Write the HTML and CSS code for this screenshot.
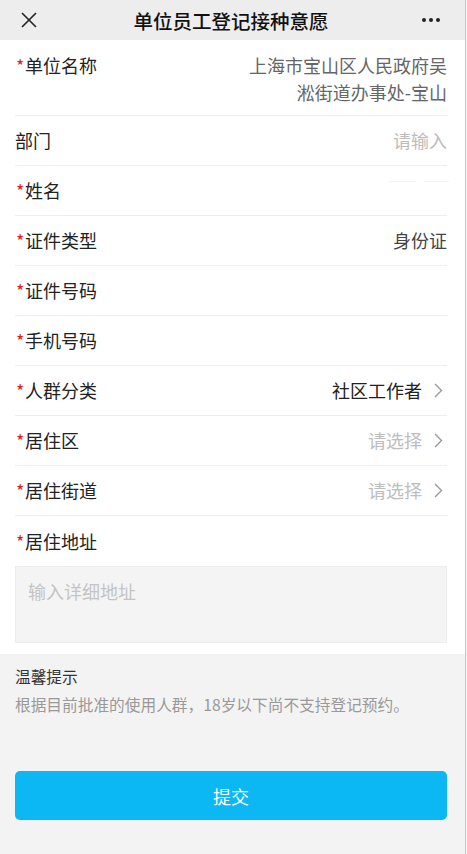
FILE: index.html
```html
<!DOCTYPE html>
<html lang="zh">
<head>
<meta charset="utf-8">
<link rel="stylesheet" href="styles.css">
</head>
<body>
<div class="page">
  <header class="nav">
    <svg class="close" width="16" height="16" viewBox="0 0 16 16"><path d="M1 1L15 15M15 1L1 15" stroke="#222" stroke-width="1.6" fill="none"/></svg>
    <div class="title">单位员工登记接种意愿</div>
    <svg class="more" width="20" height="6" viewBox="0 0 20 6"><circle cx="3" cy="3" r="2" fill="#222"/><circle cx="10" cy="3" r="2" fill="#222"/><circle cx="17" cy="3" r="2" fill="#222"/></svg>
  </header>
  <section class="form">
    <div class="row tall">
      <div class="label"><span class="req">*</span>单位名称</div>
      <div class="value gray multi">上海市宝山区人民政府吴<br>淞街道办事处-宝山</div>
    </div>
    <div class="row">
      <div class="label">部门</div>
      <div class="value ph">请输入</div>
    </div>
    <div class="row">
      <div class="label"><span class="req">*</span>姓名</div>
      <div class="value"><span class="ghost"></span><span class="ghost short"></span></div>
    </div>
    <div class="row">
      <div class="label"><span class="req">*</span>证件类型</div>
      <div class="value dark">身份证</div>
    </div>
    <div class="row">
      <div class="label"><span class="req">*</span>证件号码</div>
      <div class="value"></div>
    </div>
    <div class="row">
      <div class="label"><span class="req">*</span>手机号码</div>
      <div class="value"></div>
    </div>
    <div class="row">
      <div class="label"><span class="req">*</span>人群分类</div>
      <div class="value black">社区工作者<svg class="chev" width="9" height="15" viewBox="0 0 9 15"><path d="M1 1L7.5 7.5L1 14" stroke="#999" stroke-width="1.4" fill="none"/></svg></div>
    </div>
    <div class="row">
      <div class="label"><span class="req">*</span>居住区</div>
      <div class="value ph">请选择<svg class="chev" width="9" height="15" viewBox="0 0 9 15"><path d="M1 1L7.5 7.5L1 14" stroke="#999" stroke-width="1.4" fill="none"/></svg></div>
    </div>
    <div class="row">
      <div class="label"><span class="req">*</span>居住街道</div>
      <div class="value ph">请选择<svg class="chev" width="9" height="15" viewBox="0 0 9 15"><path d="M1 1L7.5 7.5L1 14" stroke="#999" stroke-width="1.4" fill="none"/></svg></div>
    </div>
    <div class="addr">
      <div class="label"><span class="req">*</span>居住地址</div>
      <div class="textarea">输入详细地址</div>
    </div>
  </section>
  <section class="tips">
    <div class="tips-title">温馨提示</div>
    <div class="tips-text">根据目前批准的使用人群，18岁以下尚不支持登记预约。</div>
  </section>
  <div class="btn-wrap">
    <button class="submit">提交</button>
  </div>
</div>
</body>
</html>
```
FILE: styles.css
```css
* { box-sizing: border-box; }
html, body { margin: 0; padding: 0; }
body {
  width: 467px;
  height: 854px;
  background: #f3f3f3;
  font-family: "Noto Sans CJK SC", "Noto Sans", sans-serif;
  overflow: hidden;
}
.page {
  width: 466px;
  height: 854px;
  border-right: 1px solid #c8c8c8;
  background: #f3f3f3;
}
.nav {
  height: 40px;
  background: #ededed;
  display: flex;
  align-items: center;
  justify-content: space-between;
  padding: 0 24px 0 21px;
}
.close { display: block; }
.more { display: block; }
.title {
  font-size: 19.5px;
  font-weight: 500;
  color: #111;
  margin-left: 4px;
}
.form {
  background: #fff;
  padding-left: 15px;
  padding-bottom: 11px;
}
.row {
  display: flex;
  justify-content: space-between;
  align-items: center;
  height: 50px;
  margin-right: 18px;
  border-bottom: 1px solid #eeeeee;
  font-size: 18px;
}
.row.tall {
  height: 76px;
  align-items: flex-start;
  padding-top: 12px;
}
.label {
  color: #222;
  font-size: 18px;
  line-height: 27px;
  white-space: nowrap;
}
.req {
  color: #e02020;
  display: inline-block;
  width: 9px;
  margin-left: 1px;
}
.value {
  display: flex;
  align-items: center;
  line-height: 27px;
  text-align: right;
}
.value.multi { display: block; }
.gray { color: #666; }
.dark { color: #444; }
.black { color: #222; }
.ph { color: #bdbdbd; }
.chev { margin-left: 12px; margin-right: 4px; }
.ghost {
  display: inline-block;
  width: 28px;
  height: 1px;
  background: #f4f4f4;
  margin-top: -18px;
  margin-right: 8px;
}
.ghost.short { width: 25px; margin-right: -2px; }
.addr { margin-right: 18px; }
.addr .label {
  height: 50px;
  display: flex;
  align-items: center;
}
.textarea {
  height: 77px;
  background: #f4f4f4;
  border: 1px solid #ececec;
  padding: 11px 12px;
  color: #c4c4c4;
  font-size: 18px;
  line-height: 27px;
}
.tips {
  padding: 11px 15px 0 15px;
}
.tips-title {
  color: #333;
  font-size: 15.7px;
  line-height: 24px;
}
.tips-text {
  color: #999;
  font-size: 15.7px;
  line-height: 24px;
  margin-top: 4px;
}
.btn-wrap {
  padding: 54px 18px 0 15px;
}
.submit {
  display: block;
  width: 100%;
  height: 49px;
  border: none;
  border-radius: 5px;
  background: #0bb8f4;
  color: #fff;
  font-family: "Noto Sans CJK SC", "Noto Sans", sans-serif;
  font-size: 18px;
  padding: 0;
}
```
